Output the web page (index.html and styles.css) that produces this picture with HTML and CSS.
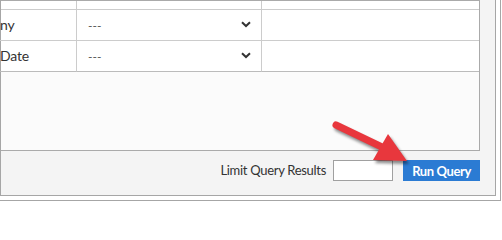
FILE: index.html
```html
<!DOCTYPE html>
<html>
<head>
<meta charset="utf-8">
<link rel="stylesheet" href="styles.css">
</head>
<body>
<div class="frame">
  <div class="panel">
    <div class="content">
      <div class="grid">
        <div class="cell c1 r0"></div><div class="cell c2 r0"></div><div class="cell c3 r0"></div>
        <div class="cell c1 lbl">ny</div>
        <div class="cell c2 sel"><span class="dash">---</span><svg class="chev" width="10" height="7" viewBox="0 0 10 7"><path d="M1 1.2 L5 5 L9 1.2" fill="none" stroke="#333" stroke-width="2"/></svg></div>
        <div class="cell c3"></div>
        <div class="cell c1 lbl last">Date</div>
        <div class="cell c2 sel last"><span class="dash">---</span><svg class="chev" width="10" height="7" viewBox="0 0 10 7"><path d="M1 1.2 L5 5 L9 1.2" fill="none" stroke="#333" stroke-width="2"/></svg></div>
        <div class="cell c3 last"></div>
      </div>
      <div class="empty"></div>
    </div>
    <div class="footer">
      <span class="limit">Limit Query Results</span>
      <input class="limit-input" type="text">
      <button class="run">Run Query</button>
    </div>
  </div>
</div>
<svg class="arrow" width="502" height="202" viewBox="0 0 502 202">
  <defs>
    <filter id="sh" x="-20%" y="-20%" width="140%" height="140%">
      <feGaussianBlur stdDeviation="1.5"/>
    </filter>
  </defs>
  <g transform="translate(2,3)" filter="url(#sh)" opacity="0.45">
    <line x1="336" y1="125" x2="384" y2="148" stroke="#000" stroke-width="7" stroke-linecap="round"/>
    <polygon points="407,161 373,160 388,134" fill="#000"/>
  </g>
  <line x1="336" y1="125" x2="384" y2="148" stroke="#e8373d" stroke-width="7" stroke-linecap="round"/>
  <polygon points="407,161 373,160 388,134" fill="#e8373d"/>
</svg>
</body>
</html>
```
FILE: styles.css
```css
html, body {
  margin: 0;
  padding: 0;
  background: #ffffff;
}
body {
  width: 502px;
  height: 202px;
  overflow: hidden;
  position: relative;
  font-family: Lato, "Open Sans", sans-serif;
  color: #333;
}
.frame {
  width: 500px;
  height: 200px;
  border-right: 1px solid #a6a6a6;
  border-bottom: 1px solid #a6a6a6;
  box-sizing: content-box;
}
.panel {
  width: 494px;
  height: 195px;
  border-left: 1px solid #a6a6a6;
  border-right: 1px solid #a6a6a6;
  border-bottom: 1px solid #a6a6a6;
  background: #f4f4f4;
  display: flex;
  flex-direction: column;
}
.content {
  width: 478px;
  height: 149px;
  border-top: 1px solid #aaaaaa;
  border-right: 1px solid #aaaaaa;
  border-bottom: 1px solid #aaaaaa;
  background: #fbfbfb;
  display: flex;
  flex-direction: column;
}
.grid {
  display: grid;
  grid-template-columns: 76px 185px 217px;
  grid-template-rows: 9px 31px 31px;
  background: #fff;
}
.cell {
  border-bottom: 1px solid #cccccc;
  box-sizing: border-box;
}
.c1, .c2 {
  border-right: 1px solid #cccccc;
}
.cell.last {
  border-bottom-color: #bbbbbb;
}
.lbl {
  font-size: 14px;
  line-height: 30px;
  padding-left: 0;
  margin-left: -1px;
  color: #333;
  letter-spacing: -0.2px;
}
.sel {
  display: flex;
  align-items: center;
  padding-left: 11px;
  padding-right: 10px;
}
.dash {
  font-size: 12px;
  color: #555;
  flex: 1;
}
.chev {
  display: block;
  margin-top: -2px;
}
.empty {
  flex: 1;
}
.footer {
  flex: 1;
  display: flex;
  justify-content: flex-end;
  align-items: flex-start;
  padding-top: 9px;
  padding-right: 15px;
}
.limit {
  font-size: 13px;
  letter-spacing: -0.3px;
  line-height: 21px;
  color: #333;
  margin-right: 7px;
}
.limit-input {
  width: 60px;
  height: 21px;
  box-sizing: border-box;
  border: 1px solid #a0a0a0;
  background: #fff;
  margin: 0 10px 0 0;
  padding: 0;
}
.run {
  width: 77px;
  height: 21px;
  box-sizing: border-box;
  border: none;
  background: #2b7bd3;
  color: #fff;
  font-family: Lato, "Open Sans", sans-serif;
  font-size: 13px;
  letter-spacing: -0.4px;
  font-weight: 700;
  padding: 0;
  margin: 0;
}
.arrow {
  position: absolute;
  left: 0;
  top: 0;
  pointer-events: none;
}
```
